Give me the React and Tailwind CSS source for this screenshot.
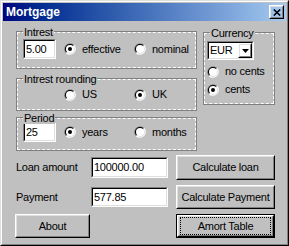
function RadioDot({ checked }) {
  return (
    <svg width="12" height="12" viewBox="0 0 12 12" className="shrink-0">
      <path d="M1.76 10.24A6 6 0 0 1 10.24 1.76Z" fill="#808080" />
      <path d="M10.24 1.76A6 6 0 0 1 1.76 10.24Z" fill="#fff" />
      <path d="M2.46 9.54A5 5 0 0 1 9.54 2.46Z" fill="#000" />
      <path d="M9.54 2.46A5 5 0 0 1 2.46 9.54Z" fill="#dfdfdf" />
      <circle cx="6" cy="6" r="4" fill="#fff" />
      {checked && <circle cx="6" cy="6" r="2" fill="#000" />}
    </svg>
  );
}

function Radio({ label, checked, className = '' }) {
  return (
    <label className={`flex items-center gap-[6px] leading-[13px] ${className}`}>
      <RadioDot checked={checked} />
      <span>{label}</span>
    </label>
  );
}

// sunken edit field
function Edit({ value, className = '' }) {
  return (
    <div className={`border border-t-[#808080] border-l-[#808080] border-r-white border-b-white ${className}`}>
      <div className="h-full flex items-center bg-white border border-t-black border-l-black border-r-[#dfdfdf] border-b-[#dfdfdf] px-[1px] leading-[13px]">
        {value}
      </div>
    </div>
  );
}

function Btn({ children, className = '', def }) {
  return (
    <button
      type="button"
      className={`block ${def ? 'border border-black' : ''} ${className}`}
    >
      <span className="block h-full border border-t-white border-l-white border-r-black border-b-black">
        <span className="h-full flex items-center justify-center border border-t-[#dfdfdf] border-l-[#dfdfdf] border-r-[#808080] border-b-[#808080] leading-[13px]">
          {def ? (
            <span className="w-full h-full mx-[1px] my-[1px] flex items-center justify-center border border-dotted border-black">
              {children}
            </span>
          ) : (
            children
          )}
        </span>
      </span>
    </button>
  );
}

function Group({ label, className = '', children }) {
  return (
    <div className={`relative border border-[#808080] outline-1 outline-dashed outline-white -outline-offset-2 ${className}`}>
      <span className="absolute left-[6px] -top-[5px] px-px bg-[#c0c0c0] leading-[11px]">{label}</span>
      {children}
    </div>
  );
}

export default function App() {
  return (
    <div className="w-[289px] h-[246px] font-['Liberation_Sans',Arial,sans-serif] text-[11px] tracking-[-0.25px] text-black">
      {/* window frame */}
      <div className="h-full border border-t-[#dfdfdf] border-l-[#dfdfdf] border-r-black border-b-black">
        <div className="h-full flex flex-col bg-[#c0c0c0] border border-t-white border-l-white border-r-[#808080] border-b-[#808080] p-px">
          {/* title bar */}
          <div className="h-[18px] flex items-center justify-between pl-[3px] pr-[2px] bg-linear-to-r from-[#000080] to-[#a6caf0]">
            <span className="font-bold text-white text-[12px] tracking-normal leading-[14px]">Mortgage</span>
            <Btn className="w-[15px] h-[14px]">
              <svg width="8" height="7" viewBox="0 0 8 7">
                <path d="M0.8 0.5L7.2 6.5M7.2 0.5L0.8 6.5" stroke="#000" strokeWidth="1.6" />
              </svg>
            </Btn>
          </div>

          <div className="pl-[13px]">
            {/* upper groups */}
            <div className="flex gap-[6px] mt-[10px]">
              <div className="w-[181px] flex flex-col">
                <Group label="Intrest" className="h-[38px] flex items-center pl-[6px] pb-[2px]">
                  <Edit value="5.00" className="w-[33px] h-[20px]" />
                  <Radio label="effective" checked className="ml-[8px] w-[70px]" />
                  <Radio label="nominal" />
                </Group>
                <Group label="Intrest rounding" className="mt-[9px] h-[33px] flex items-center pl-[47px]">
                  <Radio label="US" className="w-[70px]" />
                  <Radio label="UK" checked />
                </Group>
                <Group label="Period" className="mt-[6px] h-[34px] flex items-center pl-[6px] pb-[4px]">
                  <Edit value="25" className="w-[33px] h-[20px]" />
                  <Radio label="years" checked className="ml-[8px] w-[70px]" />
                  <Radio label="months" />
                </Group>
              </div>

              <Group label="Currency" className="w-[72px] h-[73px] mt-[1px] flex flex-col pl-[3px] pt-[8px]">
                <div className="w-[47px] h-[19px] border border-t-[#808080] border-l-[#808080] border-r-white border-b-white">
                  <div className="h-full flex items-center justify-between bg-white border border-t-black border-l-black border-r-[#dfdfdf] border-b-[#dfdfdf] pl-[1px]">
                    <span className="leading-[13px]">EUR</span>
                    <Btn className="w-[14px] h-full">
                      <svg width="7" height="4" viewBox="0 0 7 4">
                        <polygon points="0,0 7,0 3.5,4" fill="#000" />
                      </svg>
                    </Btn>
                  </div>
                </div>
                <Radio label="no cents" className="mt-[5px]" />
                <Radio label="cents" checked className="mt-[5px]" />
              </Group>
            </div>

            {/* amount rows */}
            <div className="mt-[4px] flex items-center h-[25px]">
              <span className="w-[75px] leading-[13px]">Loan amount</span>
              <Edit value="100000.00" className="w-[77px] h-[21px]" />
              <Btn className="ml-[8px] w-[99px] h-[25px]">Calculate loan</Btn>
            </div>
            <div className="mt-[5px] flex items-center h-[24px]">
              <span className="w-[75px] leading-[13px]">Payment</span>
              <Edit value="577.85" className="w-[77px] h-[20px]" />
              <Btn className="ml-[8px] w-[99px] h-[24px]">Calculate Payment</Btn>
            </div>
            <div className="mt-[5px] flex items-center h-[24px] -ml-px">
              <Btn className="w-[75px] h-[24px]">About</Btn>
              <Btn def className="ml-[86px] w-[99px] h-[24px]">Amort Table</Btn>
            </div>
          </div>
        </div>
      </div>
    </div>
  );
}
